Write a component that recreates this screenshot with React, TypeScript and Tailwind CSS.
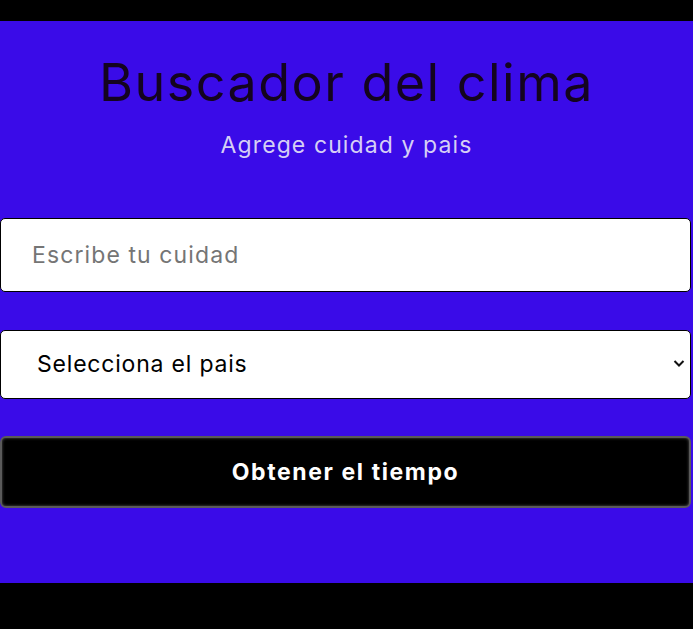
import React from "react";

export default function App() {
  const font = { fontFamily: "Inter, 'DejaVu Sans', sans-serif" };
  return (
    <div className="w-[693px] h-[629px] bg-black flex flex-col" style={font}>
      <div className="h-[21px] shrink-0" />
      <div className="h-[562px] bg-[#3a0be8] flex flex-col">
        <h1 className="mt-[30px] text-center text-[52px] leading-[64px] text-[#14041f] tracking-[1.5px]">
          Buscador del clima
        </h1>
        <p className="mt-[14px] text-center text-[23px] leading-[32px] text-[#d6cff5] tracking-[1.1px]">
          Agrege cuidad y pais
        </p>
        <div className="mt-[57px] w-[691px] h-[74px] bg-white border border-black rounded-[5px] flex items-center pl-[31px]">
          <span className="text-[23px] text-[#757575] tracking-[1.1px]">Escribe tu cuidad</span>
        </div>
        <div className="relative mt-[38px] w-[691px] h-[69px] bg-white border border-black rounded-[5px] flex items-center pl-[36px]">
          <span className="text-[23px] text-black tracking-[0.8px]">Selecciona el pais</span>
          <svg className="absolute right-[5px] top-[28px]" width="12" height="9" viewBox="0 0 12 9">
            <path d="M1.5 2 L6 6.5 L10.5 2" fill="none" stroke="#111" strokeWidth="2" />
          </svg>
        </div>
        <div className="mt-[37px] w-[691px] h-[72px] bg-black rounded-[6px] border-2 border-[#5a5a5a] shadow-[inset_0_0_3px_rgba(255,255,255,0.35)] flex items-center justify-center">
          <span className="text-[23px] font-bold text-white tracking-[1.6px]">Obtener el tiempo</span>
        </div>
      </div>
    </div>
  );
}
